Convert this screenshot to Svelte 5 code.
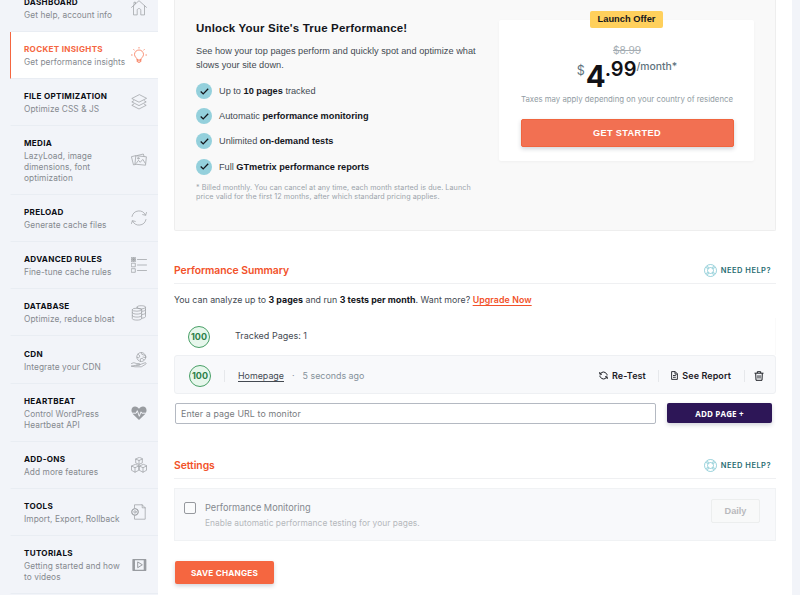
<script lang="ts">
  interface MenuItem {
    title: string;
    text: string;
    icon: string;
    active?: boolean;
  }

  const menu: MenuItem[] = [
    { title: 'DASHBOARD', text: 'Get help, account info', icon: 'home' },
    { title: 'ROCKET INSIGHTS', text: 'Get performance insights', icon: 'bulb', active: true },
    { title: 'FILE OPTIMIZATION', text: 'Optimize CSS & JS', icon: 'layers' },
    { title: 'MEDIA', text: 'LazyLoad, image dimensions, font optimization', icon: 'media' },
    { title: 'PRELOAD', text: 'Generate cache files', icon: 'refresh' },
    { title: 'ADVANCED RULES', text: 'Fine-tune cache rules', icon: 'rules' },
    { title: 'DATABASE', text: 'Optimize, reduce bloat', icon: 'database' },
    { title: 'CDN', text: 'Integrate your CDN', icon: 'cdn' },
    { title: 'HEARTBEAT', text: 'Control WordPress Heartbeat API', icon: 'heart' },
    { title: 'ADD-ONS', text: 'Add more features', icon: 'cubes' },
    { title: 'TOOLS', text: 'Import, Export, Rollback', icon: 'tools' },
    { title: 'TUTORIALS', text: 'Getting started and how to videos', icon: 'video' },
  ];

  const features = [
    { before: 'Up to ', bold: '10 pages', after: ' tracked' },
    { before: 'Automatic ', bold: 'performance monitoring', after: '' },
    { before: 'Unlimited ', bold: 'on-demand tests', after: '' },
    { before: 'Full ', bold: 'GTmetrix performance reports', after: '' },
  ];

  let url = $state('');
  let monitoring = $state(false);
</script>

{#snippet menuIcon(name: string)}
  <svg class="menu-icon" viewBox="0 0 16 16" fill="none" stroke="currentColor" stroke-width="0.7" stroke-linejoin="round" stroke-linecap="round">
    {#if name === 'home'}
      <path d="M.5 7.4 8 .7l7.5 6.7M2.5 5.9v9h3.7v-4.7c0-2.2 3.6-2.2 3.6 0v4.7h3.7v-9M3 5V2.2h1.5v1.5" />
    {:else if name === 'bulb'}
      <path d="M6.2 12.5c0-1.7-2.7-2.4-2.7-5a4.5 4.5 0 0 1 9 0c0 2.600-2.700 3.300-2.700 5zM6.200 12.500v1.500c0 2 3.600 2 3.600 0v-1.500M6.300 14h3.400M8 .4v.7M2.700 2.500l.6.6M13.300 2.500l-.6.6M.3 8h.9M14.800 8h.9" />
    {:else if name === 'layers'}
      <path d="M8 .8.8 4.500 8 8.200l7.200-3.700zM2.800 6.700.8 7.900 8 11.600l7.200-3.700-2-1.200M2.800 10.100l-2 1.200L8 15l7.200-3.700-2-1.200" />
    {:else if name === 'media'}
      <path d="m5.200 3.800 10.200 1-.9 8.400-10.200-1zM4.300 12.500l-1.800.4L.4 4.700l4.500-1.100M6.300 3.500 12.300 2l.7 2.200M5.300 11.300l2.200-3 1.700 2 2.600-2.900 2.400 3.800" />
      <circle cx="7.300" cy="6.300" r=".8" />
    {:else if name === 'refresh'}
      <path d="M1 6.500a7.200 7.200 0 0 1 13.500-1.500M15 9.500A7.200 7.200 0 0 1 1.500 11M15.500 2.500l-.9 2.800-2.900-.7M.5 13.500l.9-2.800 2.900.7" />
    {:else if name === 'rules'}
      <path d="M.7.7h3.600v3.600H.7zM.7 6.200h3.600v3.600H.7zM.7 11.700h3.600v3.600H.7zM6.500 2.500h9M6.500 8h9M6.500 13.500h9M.7.7l3.600 3.600M4.300.7.7 4.300M.7 2.500h3.600M2.500.7v3.600" />
    {:else if name === 'database'}
      <path d="M6 3V2.200C6 .2 14.500.2 14.500 2.200v9.300c0 1-1.700 1.600-3.900 1.700M14.500 4.700c0 .9-1.500 1.500-3.500 1.600M14.500 7.900c0 .9-1.500 1.500-3.500 1.600M6 2.200c0 1 1.800 1.600 4.300 1.600s4.200-.6 4.200-1.600M1.300 4.800v8.800c0 2 9.300 2 9.300 0V4.800M1.300 7.700c0 2 9.300 2 9.300 0M1.300 10.700c0 2 9.300 2 9.300 0" />
      <ellipse cx="5.950" cy="4.700" rx="4.650" ry="1.500" />
    {:else if name === 'cdn'}
      <circle cx="10.300" cy="5" r="4.500" />
      <path d="M7 2.200 9 4 7.500 6l-1.500-.8M9.500 9.300l-.3-2.300 2-.8 1.500 1.700M10.500.7l.3 1.600 2.200.8 1.500.7M12 5l2.500.7M.5 11.500l2.300-.8 3 .9h2.400c1.200.2 1.200 1.400 0 1.500H5.500M9.200 12.500l4.700-1.700c1.200-.3 1.700.8.8 1.400l-4.400 2.600H4l-3.500-.6z" />
    {:else if name === 'heart'}
      <path d="M8 15 1.800 8.900C-1 5 1 1.500 4 1.500c2 0 3.200 1 4 2.300.8-1.300 2-2.300 4-2.300 3 0 5 3.500 2.200 7.400z" fill="currentColor" stroke="none" />
      <path class="pulse" d="M1 8.200h4.200l1.100-2.500 2 5.600 1.700-4.500.8 1.400H15" />
    {:else if name === 'cubes'}
      <path d="M8 .5 4.700 2v3.900L8 7.400l3.300-1.500V2zM4.700 2 8 3.500 11.300 2M8 3.500v3.900M4 7.500.5 9v4.300L4 15.200l3.700-1.900V9zM.5 9 4 10.700 7.700 9M4 10.700v4.500M12 7.500 8.300 9v4.300l3.700 1.900 3.500-1.900V9zM8.300 9l3.700 1.700L15.500 9M12 10.700v4.500" />
    {:else if name === 'tools'}
      <path d="M3.500 3.800V.8h7.700l3 3v11.400H3.500v-3.500M11.200.8v3h3" />
      <circle cx="4" cy="7.900" r="3.200" stroke-width="1.100" stroke-dasharray="1.500 .5" />
      <circle cx="4" cy="7.900" r="1.200" />
    {:else}
      <g stroke-width="1.300">
        <path d="M2 2.700h12.700v10.600H2z" />
        <path d="M3 3v10M13.700 3v10" stroke-width="2" stroke-dasharray="1.600 .5" />
        <path d="M6.700 5.300v5.400L11 8z" stroke-width="1" />
      </g>
    {/if}
  </svg>
{/snippet}

{#snippet sectionHeader(title: string)}
  <header class="section-header">
    <h2>{title}</h2>
    <a class="help" href="#help">
      <svg width="13" height="13" viewBox="0 0 13 13" fill="none" stroke="currentColor" stroke-width="0.7">
        <circle cx="6.500" cy="6.500" r="6" />
        <circle cx="6.500" cy="6.500" r="3" />
        <path d="m2 3.500 2.100 1M3.500 2l1 2.100M9.500 2l-1 2.100M11 3.500l-2.100 1M2 9.500l2.100-1M3.500 11l1-2.100M9.500 11l-1-2.100M11 9.500l-2.100-1" />
      </svg>
      NEED HELP?
    </a>
  </header>
{/snippet}

<div class="page">
  <aside class="sidebar">
    <nav>
      {#each menu as item}
        <a href="#{item.icon}" class="menu-item" class:active={item.active}>
          <span class="menu-copy">
            <span class="menu-title">{item.title}</span>
            <span class="menu-text">{item.text}</span>
          </span>
          {@render menuIcon(item.icon)}
        </a>
      {/each}
    </nav>
  </aside>

  <main>
    <section class="promo">
      <div class="promo-copy">
        <h1>Unlock Your Site's True Performance!</h1>
        <p class="lead">See how your top pages perform and quickly spot and optimize what slows your site down.</p>
        <ul>
          {#each features as feature}
            <li>
              <span class="check">
                <svg width="9" height="7" viewBox="0 0 9 7" fill="none" stroke="currentColor" stroke-width="1.300">
                  <path d="m.7 3.500 2.500 2.400L8.200.8" />
                </svg>
              </span>
              <span>{feature.before}<strong>{feature.bold}</strong>{feature.after}</span>
            </li>
          {/each}
        </ul>
        <p class="fine">* Billed monthly. You can cancel at any time, each month started is due. Launch<br />price valid for the first 12 months, after which standard pricing applies.</p>
      </div>

      <div class="offer">
        <span class="badge">Launch Offer</span>
        <s>$8.99</s>
        <div class="price">
          <span class="currency">$</span>
          <span class="whole">4</span>
          <span class="cents">.99</span>
          <span class="period">/month*</span>
        </div>
        <p class="tax">Taxes may apply depending on your country of residence</p>
        <button class="btn start">GET STARTED</button>
      </div>
    </section>

    {@render sectionHeader('Performance Summary')}
    <p class="intro">
      You can analyze up to <strong>3 pages</strong> and run <strong>3 tests per month</strong>. Want more? <a href="#upgrade">Upgrade Now</a>
    </p>

    <div class="summary-row">
      <span class="score">100</span>
      <span class="tracked">Tracked Pages: 1</span>
    </div>
    <div class="page-row">
      <span class="score">100</span>
      <span class="page-info">
        <a href="#homepage">Homepage</a>
        <span class="dot">·</span>
        <span class="ago">5 seconds ago</span>
      </span>
      <span class="action retest">
        <svg width="9" height="9" viewBox="0 0 9 9" fill="none" stroke="currentColor" stroke-width="1">
          <path d="M1.300 3A3.500 3.500 0 0 1 7.700 3.200M7.700 6A3.500 3.500 0 0 1 1.300 5.800M.8 1v2.200H3M8.200 8V5.800H6M8 3.200V4.500M1 5.800V4.500" />
        </svg>
        Re-Test
      </span>
      <span class="action report">
        <svg width="7" height="9" viewBox="0 0 7 9" fill="none" stroke="currentColor" stroke-width="0.9">
          <path d="M.6.6h3.600l2.200 2.200v5.600H.6zM4 .6v2.500h2.400M2 4.500h2.800M2 6.300h2.800" />
        </svg>
        See Report
      </span>
      <span class="action trash">
        <svg width="10" height="10" viewBox="0 0 10 10" fill="none" stroke="currentColor" stroke-width="1">
          <path d="M.5 2.200h9M3.300 2V.7h3.400V2M1.700 2.300l.3 7h6l.3-7M4 4.200v3.300M6 4.200v3.300" />
        </svg>
      </span>
    </div>

    <div class="add-form">
      <input type="text" placeholder="Enter a page URL to monitor" bind:value={url} />
      <button class="btn add">ADD PAGE +</button>
    </div>

    {@render sectionHeader('Settings')}
    <div class="setting">
      <input type="checkbox" aria-label="Performance Monitoring" bind:checked={monitoring} />
      <div class="setting-copy">
        <div class="setting-title">Performance Monitoring</div>
        <div class="setting-text">Enable automatic performance testing for your pages.</div>
      </div>
      <span class="frequency">Daily</span>
    </div>

    <button class="btn save">SAVE CHANGES</button>
  </main>
</div>

<style>
  :global(body) {
    overflow: hidden;
  }

  .page {
    display: grid;
    grid-template-columns: 158px 634px 8px;
    height: 595px;
    overflow: hidden;
    background: #f2f4f9;
    font-family: Inter, 'Liberation Sans', sans-serif;
    color: #444a52;
  }

  h1,
  h2,
  p,
  ul {
    margin: 0;
    padding: 0;
  }

  button {
    border: none;
    font-family: inherit;
    cursor: pointer;
  }

  strong {
    color: #14161c;
  }

  .sidebar {
    padding-left: 10px;
    height: 595px;
    overflow: hidden;
  }

  nav {
    margin-top: -15.700px;
  }

  .menu-item {
    display: flex;
    align-items: center;
    justify-content: space-between;
    box-sizing: border-box;
    padding: 11.2px 11px 10.5px 13px;
    border-left: 1px solid transparent;
    border-bottom: 1px solid #e9edf3;
    color: #999ca1;
    text-decoration: none;
  }

  .menu-item.active {
    background: #fff;
    border-left-color: #f56640;
    color: #f56640;
  }

  .menu-copy {
    width: 103px;
    flex: none;
    white-space: nowrap;
  }

  .menu-title {
    display: block;
    font-size: 8.100px;
    font-weight: 700;
    letter-spacing: 0.300px;
    line-height: 13px;
    margin-bottom: 1px;
    color: #0c0e14;
  }

  .active .menu-title {
    color: #f56640;
  }

  .menu-text {
    display: block;
    width: 101px;
    font-size: 8.300px;
    letter-spacing: 0.080px;
    line-height: 10.600px;
    color: #85898f;
    white-space: normal;
  }

  .menu-item:nth-child(-n + 2) .menu-text {
    white-space: nowrap;
  }

  .menu-icon {
    width: 16px;
    height: 16px;
    flex: none;
  }

  .pulse {
    stroke: #f2f4f9;
    stroke-width: 1;
  }

  main {
    padding: 0 16px;
    background: #fff;
  }

  .promo {
    display: flex;
    align-items: flex-start;
    justify-content: space-between;
    box-sizing: border-box;
    height: 231px;
    padding: 20px 21px 0;
    border: 1px solid #eee;
    border-top: none;
    border-radius: 0 0 2px 2px;
    background: #f9f9f9;
    font-family: 'Liberation Sans', Arial, sans-serif;
  }

  .promo-copy {
    width: 290px;
  }

  h1 {
    font-size: 11.500px;
    line-height: 17px;
    letter-spacing: 0.180px;
    color: #14161c;
  }

  .lead {
    width: 285px;
    margin-top: 7px;
    font-size: 9.200px;
    line-height: 14px;
    letter-spacing: 0.02px;
  }

  ul {
    display: grid;
    gap: 9.200px;
    margin-top: 11px;
    list-style: none;
  }

  li {
    display: flex;
    align-items: center;
    gap: 7px;
    height: 16px;
    font-size: 9.200px;
  }

  .check {
    display: grid;
    place-items: center;
    width: 16px;
    height: 16px;
    border-radius: 50%;
    background: #94d0dc;
    color: #14161c;
  }

  .fine {
    margin-top: 8px;
    font-family: Inter, sans-serif;
    font-size: 7.200px;
    line-height: 9.600px;
    letter-spacing: 0.060px;
    color: #9ba4ab;
    white-space: nowrap;
  }

  .offer {
    position: relative;
    display: flex;
    flex-direction: column;
    align-items: center;
    box-sizing: border-box;
    width: 255px;
    height: 141px;
    padding: 22px 20px 0 21px;
    border-radius: 2px;
    background: #fff;
    box-shadow: 0 1px 3px rgba(0, 0, 0, 0.04);
  }

  .badge {
    position: absolute;
    top: -9px;
    left: 91px;
    width: 73px;
    height: 17px;
    border-radius: 2px;
    background: #ffd05c;
    color: #14161c;
    font-size: 9.300px;
    font-weight: 700;
    line-height: 17px;
    text-align: center;
  }

  s {
    margin-top: 1px;
    font-family: Inter, sans-serif;
    font-size: 10.200px;
    line-height: 14px;
    color: #a5adb3;
  }

  .price {
    display: flex;
    align-items: flex-start;
    height: 35px;
    font-family: Inter, sans-serif;
    color: #121116;
  }

  .currency {
    margin: 6px 1px 0 0;
    font-size: 12.500px;
    line-height: 16px;
    color: #60737d;
  }

  .whole {
    margin-top: 5px;
    font-size: 29.500px;
    font-weight: 700;
    line-height: 28px;
  }

  .cents {
    margin: 2px 0 0 -1px;
    font-size: 20px;
    font-weight: 600;
    line-height: 20px;
  }

  .period {
    margin-top: 3px;
    font-size: 10.400px;
    font-weight: 500;
    line-height: 14px;
    color: #60737d;
  }

  .tax {
    margin-top: 2px;
    font-family: Inter, sans-serif;
    font-size: 7.800px;
    line-height: 11px;
    color: #929ca3;
    white-space: nowrap;
  }

  .btn {
    color: #fff;
    font-weight: 700;
    border-radius: 2px;
    background: #f56640;
    box-shadow: 0 2px 4px rgba(30, 40, 70, 0.2);
  }

  .start {
    width: 213px;
    height: 28px;
    margin-top: 14px;
    background: #f27052;
    border: 1px solid #f0653f;
    font-size: 9.200px;
    letter-spacing: 0.350px;
  }

  .section-header {
    display: flex;
    align-items: center;
    justify-content: space-between;
    box-sizing: border-box;
    height: 28px;
    margin-top: 25px;
    padding-top: 1px;
    border-bottom: 1px solid #eff0f2;
  }

  h2 {
    font-size: 10.400px;
    font-weight: 600;
    letter-spacing: -0.060px;
    color: #f2522a;
  }

  .help {
    display: flex;
    align-items: center;
    gap: 4px;
    margin-right: 5px;
    font-size: 7.500px;
    font-weight: 600;
    letter-spacing: 0.480px;
    color: #1f6b71;
    text-decoration: none;
  }

  .help svg {
    color: #6fbfcb;
  }

  .intro {
    margin-top: 9px;
    font-size: 8.800px;
    line-height: 14px;
    letter-spacing: 0.020px;
    white-space: nowrap;
  }

  .intro a {
    color: #f2522a;
    font-weight: 600;
    letter-spacing: 0.080px;
    text-underline-offset: 1.500px;
  }

  .summary-row {
    display: flex;
    align-items: center;
    box-sizing: border-box;
    height: 37px;
    margin-top: 11px;
    padding: 0 14px;
    border-right: 1px solid #fafafa;
  }

  .score {
    display: grid;
    place-items: center;
    box-sizing: border-box;
    width: 22px;
    height: 22px;
    border: 1px solid #49a067;
    border-radius: 50%;
    background: #e7f7ec;
    color: #2c8048;
    font-size: 9px;
    font-weight: 700;
  }

  .tracked {
    margin: -3px 0 0 25px;
    font-size: 9px;
  }

  .page-row {
    display: flex;
    align-items: center;
    box-sizing: border-box;
    height: 39px;
    padding: 2px 11px 0 14px;
    border: 1px solid #eef0f3;
    border-radius: 3px;
    background: #f8f9fb;
  }

  .page-info {
    display: flex;
    align-items: center;
    height: 12px;
    margin-left: 13px;
    padding-left: 13px;
    border-left: 1px solid #e6e8eb;
    font-size: 8.900px;
  }

  .page-info a {
    color: #444a52;
    text-underline-offset: 1.500px;
  }

  .dot {
    margin: 0 8px;
    color: #85919a;
  }

  .ago {
    color: #85919a;
  }

  .action {
    display: flex;
    align-items: center;
    height: 12px;
    gap: 4px;
    color: #1d2026;
    font-size: 9px;
    font-weight: 600;
    letter-spacing: 0.080px;
  }

  .retest {
    margin-left: auto;
    padding-right: 12px;
  }

  .report {
    padding: 0 13px 0 12px;
    gap: 4.500px;
    border-left: 1px solid #e6e8eb;
  }

  .trash {
    padding-left: 9px;
    border-left: 1px solid #e6e8eb;
  }

  .add-form {
    display: flex;
    gap: 11px;
    margin: 9px 4px 27px 1px;
  }

  .add-form + .section-header {
    margin-top: 0;
  }

  .add-form input {
    flex: 1;
    box-sizing: border-box;
    height: 21px;
    padding: 0 5px;
    border: 1px solid #b4b9c2;
    border-radius: 2px;
    font-family: inherit;
    font-size: 8.800px;
    letter-spacing: 0.110px;
    outline: none;
  }

  .add-form input::placeholder {
    color: #777b80;
  }

  .add {
    width: 105px;
    height: 20px;
    padding: 0;
    background: #2d1657;
    font-family: 'Open Sans', sans-serif;
    font-size: 8px;
    letter-spacing: 0.150px;
  }

  .setting {
    display: flex;
    align-items: flex-start;
    box-sizing: border-box;
    height: 53px;
    margin-top: 9px;
    padding: 12px 15px 0 9px;
    border: 1px solid #f0f2f4;
    background: #f8f9fb;
  }

  .setting input {
    appearance: none;
    box-sizing: border-box;
    width: 12px;
    height: 12px;
    margin: 1px 9px 0 0;
    border: 1px solid #96999e;
    border-radius: 2px;
    background: #fafbfc;
  }

  .setting-title {
    font-size: 9.200px;
    line-height: 13px;
    color: #85898f;
  }

  .setting-text {
    margin-top: 3px;
    font-size: 8.400px;
    line-height: 12px;
    letter-spacing: 0.030px;
    color: #b5b8bc;
  }

  .frequency {
    box-sizing: border-box;
    width: 49px;
    height: 24px;
    margin: -2px 0 0 auto;
    border: 1px solid #eceeee;
    border-radius: 2px;
    background: #f8f9f9;
    color: #b8babd;
    font-family: 'Liberation Sans', Arial, sans-serif;
    font-size: 9.200px;
    font-weight: 700;
    line-height: 22px;
    text-align: center;
  }

  .save {
    display: block;
    width: 99px;
    height: 23px;
    margin: 20px 0 0 1px;
    padding: 0;
    font-size: 8.200px;
    letter-spacing: 0.200px;
  }
</style>
